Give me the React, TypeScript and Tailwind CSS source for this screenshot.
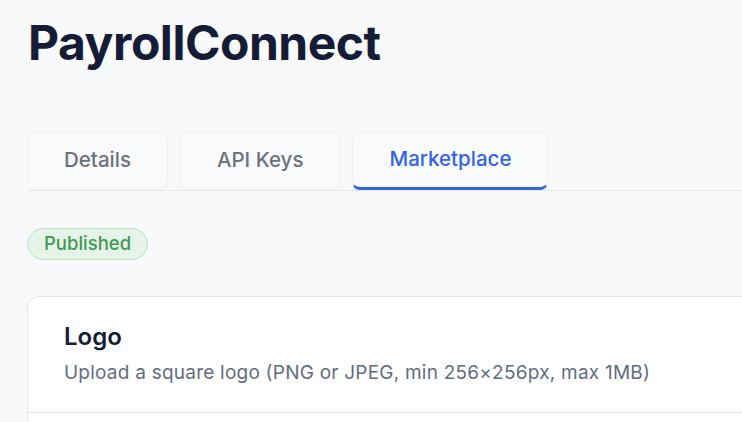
import React, { useState } from 'react';

const tabs = ['Details', 'API Keys', 'Marketplace'];

export default function App() {
  const [active, setActive] = useState('Marketplace');

  return (
    <div className="h-screen w-screen overflow-hidden bg-[#f8f9fb] font-['Inter',sans-serif]">
      <div className="w-[1000px] pl-[27px] pt-[19px]">
        <h1 className="ml-px text-5xl leading-none font-bold tracking-[-0.01em] text-[#151c36]">PayrollConnect</h1>

        <div className="mt-16 flex gap-3 border-b border-[#e6e8ec]">
          {tabs.map(t => (
            <button
              key={t}
              onClick={() => setActive(t)}
              className={
                t === active
                  ? 'h-[59px] rounded-lg border border-[#eff1f4] border-b-[3px] border-b-[#3264e6] bg-[#f9fafb] px-9 text-[20.5px] font-medium text-[#3264e6]'
                  : 'h-[59px] rounded-lg border border-[#eff1f4] bg-[#f9fafb] px-9 text-[20.5px] font-medium text-[#6b7280]'
              }
            >
              {t}
            </button>
          ))}
        </div>

        <div className="mt-[37px] flex">
          <span className="inline-flex h-8 items-center rounded-full border border-[#bfe2c6] bg-[#e6f3e9] px-4 text-[18.5px] font-medium text-[#3e9a50]">
            Published
          </span>
        </div>

        <div className="mt-9 w-[780px] rounded-xl border border-[#e5e7eb] bg-white">
          <div className="border-b border-[#e5e7eb] px-9 pt-6 pb-6">
            <h2 className="text-2xl font-semibold text-[#151c36]">Logo</h2>
            <p className="mt-1.5 text-[19px] tracking-[0.012em] text-[#626d80]">Upload a square logo (PNG or JPEG, min 256×256px, max 1MB)</p>
          </div>
          <div className="h-40" />
        </div>
      </div>
    </div>
  );
}
